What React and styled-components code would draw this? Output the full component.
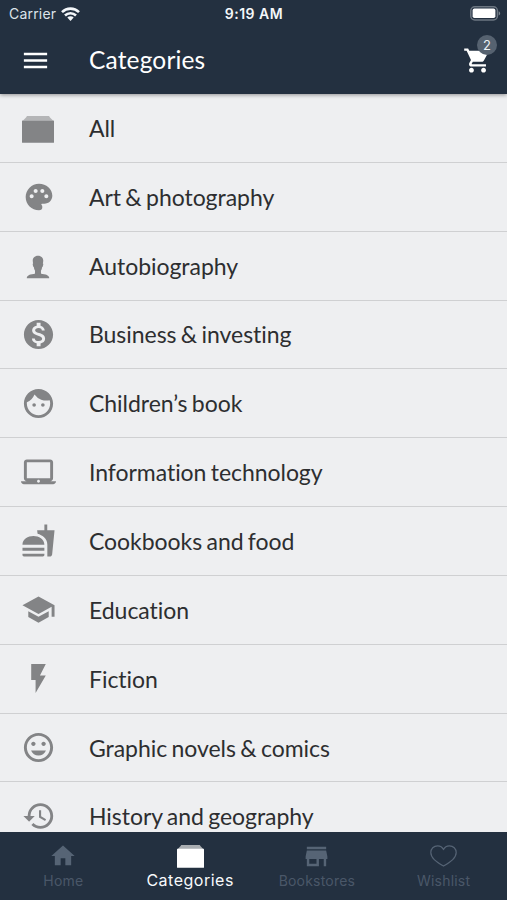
import React from "react";
import styled, { createGlobalStyle } from "styled-components";
import {
  MdMenu,
  MdShoppingCart,
  MdPalette,
  MdMonetizationOn,
  MdFace,
  MdLaptopMac,
  MdFastfood,
  MdSchool,
  MdFlashOn,
  MdInsertEmoticon,
  MdHistory,
  MdHome,
} from "react-icons/md";
import { IoIosPerson } from "react-icons/io";

const AlbumsIcon = ({ width, height, lid }) => (
  <svg width={width} height={height} viewBox="0 0 32 27" preserveAspectRatio="none">
    <path d="M5 0h22l1 1.6 3 3H1l3-3z" fill={lid} />
    <rect x="0" y="4.4" width="32" height="22.4" rx="0.6" fill="currentColor" />
  </svg>
);

const StoreIcon = () => (
  <svg width="29" height="29" viewBox="0 0 24 24">
    <path
      d="M20 4H4v2h16V4zm1 10v-2l-1-5H4l-1 5v2h1v6h10v-6h4v6h2v-6h1zm-9 4H6v-4h6v4z"
      fill="currentColor"
    />
  </svg>
);

const HeartIcon = () => (
  <svg width="27" height="22" viewBox="0 0 27 22">
    <path
      d="M13.5 4.6C12.3 2.1 10 .8 7.6.8 3.7.8.8 3.8.8 7.6c0 5.3 5 8.8 12.7 13.5C21.2 16.4 26.2 12.9 26.2 7.6c0-3.8-2.9-6.8-6.8-6.8-2.4 0-4.7 1.3-5.9 3.8z"
      fill="none"
      stroke="currentColor"
      strokeWidth="1.2"
      strokeLinejoin="round"
    />
  </svg>
);

const WifiIcon = () => (
  <svg width="19" height="14" viewBox="0 0 19 14">
    <g fill="none" stroke="#f4f7fa" strokeWidth="2.6">
      <path d="M1 5.1a12.2 12.2 0 0 1 17 0" />
      <path d="M4 8.5a7.9 7.9 0 0 1 11 0" />
    </g>
    <path d="M6.3 10.6a4.6 4.6 0 0 1 6.4 0L9.5 13.9z" fill="#f4f7fa" />
  </svg>
);

const BatteryIcon = () => (
  <svg width="31" height="15" viewBox="0 0 31 15">
    <rect x="0.8" y="0.8" width="26.6" height="13.2" rx="4" fill="none" stroke="#6c7681" strokeWidth="1.5" />
    <rect x="2.6" y="2.6" width="22.8" height="9.4" rx="1.8" fill="#fff" />
    <path d="M28.7 5.2a2.4 2.4 0 0 1 0 4.4z" fill="#7c8690" />
  </svg>
);

const categories = [
  { name: "All", icon: <AlbumsIcon width={32} height={27} lid="#b4b5b7" />, shift: -1, drop: 4 },
  { name: "Art & photography", icon: <MdPalette size={32} /> },
  { name: "Autobiography", icon: <IoIosPerson size={30} />, shift: -1, drop: 3 },
  { name: "Business & investing", icon: <MdMonetizationOn size={35} /> },
  { name: "Children’s book", icon: <MdFace size={35} /> },
  { name: "Information technology", icon: <MdLaptopMac size={35} /> },
  { name: "Cookbooks and food", icon: <MdFastfood size={35} /> },
  { name: "Education", icon: <MdSchool size={35} /> },
  { name: "Fiction", icon: <MdFlashOn size={35} /> },
  { name: "Graphic novels & comics", icon: <MdInsertEmoticon size={35} /> },
  { name: "History and geography", icon: <MdHistory size={34} /> },
];

const tabs = [
  { name: "Home", icon: <MdHome size={28} /> },
  { name: "Categories", icon: <AlbumsIcon width={27} height={23} lid="#a9adb1" />, active: true },
  { name: "Bookstores", icon: <StoreIcon /> },
  { name: "Wishlist", icon: <HeartIcon /> },
];

const App = () => {
  return (
    <Container>
      <GlobalStyle />
      <Header>
        <StatusBar>
          <Carrier>
            Carrier
            <WifiIcon />
          </Carrier>
          <Time>9:19 AM</Time>
          <Battery>
            <BatteryIcon />
          </Battery>
        </StatusBar>
        <Toolbar>
          <MenuButton aria-label="menu">
            <MdMenu size={31} />
          </MenuButton>
          <Title>Categories</Title>
          <CartButton aria-label="cart">
            <MdShoppingCart size={29} />
            <Badge>2</Badge>
          </CartButton>
        </Toolbar>
      </Header>

      <List>
        {categories.map((item) => (
          <Row key={item.name}>
            <RowIcon $shift={item.shift} $drop={item.drop}>
              {item.icon}
            </RowIcon>
            <RowText>{item.name}</RowText>
          </Row>
        ))}
      </List>

      <TabBar>
        {tabs.map((tab) => (
          <Tab key={tab.name} $active={tab.active}>
            <TabIcon>{tab.icon}</TabIcon>
            <TabText $active={tab.active}>{tab.name}</TabText>
          </Tab>
        ))}
      </TabBar>
    </Container>
  );
};

const GlobalStyle = createGlobalStyle`
  * {
    box-sizing: border-box;
  }
  body {
    margin: 0;
    background-color: #eeeff1;
  }
  svg {
    display: block;
    flex-shrink: 0;
  }
`;

const Container = styled.div`
  display: flex;
  flex-direction: column;
  width: 507px;
  height: 900px;
  overflow: hidden;
  background-color: #eeeff1;
  font-family: Lato, "Liberation Sans", sans-serif;
  font-variant-ligatures: none;
`;

const Header = styled.div`
  flex: none;
  height: 94px;
  background-color: #233040;
  box-shadow: 0 1px 4px rgba(0, 0, 0, 0.4);
  z-index: 1;
`;

const StatusBar = styled.div`
  display: grid;
  grid-template-columns: 1fr auto 1fr;
  align-items: center;
  height: 27px;
  padding: 0 6px 0 9px;
  font-family: Inter, "Liberation Sans", sans-serif;
  color: #f4f7fa;
`;

const Carrier = styled.div`
  display: flex;
  align-items: center;
  gap: 5px;
  font-size: 14px;
  letter-spacing: 0.2px;
  color: #dce3ea;
`;

const Time = styled.div`
  font-size: 14px;
  font-weight: 600;
  letter-spacing: 0.5px;
  padding-right: 2px;
`;

const Battery = styled.div`
  display: flex;
  justify-content: flex-end;
`;

const Toolbar = styled.div`
  display: flex;
  align-items: center;
  height: 66px;
  padding: 0 15px 0 20px;
  color: white;
`;

const MenuButton = styled.button`
  width: 69px;
  padding: 0;
  border: none;
  background: none;
  color: inherit;
  cursor: pointer;
`;

const Title = styled.div`
  flex: 1;
  font-size: 24.5px;
  line-height: 30px;
  letter-spacing: 0.15px;
`;

const CartButton = styled.button`
  position: relative;
  padding: 0;
  border: none;
  background: none;
  color: inherit;
  cursor: pointer;
`;

const Badge = styled.span`
  position: absolute;
  top: -11px;
  right: -5px;
  width: 20px;
  height: 20px;
  border-radius: 50%;
  background-color: #566270;
  color: #eef2f6;
  font-family: Inter, "Liberation Sans", sans-serif;
  font-size: 13px;
  line-height: 20px;
  text-align: center;
`;

const List = styled.div`
  flex: 1;
  min-height: 0;
  overflow: hidden;
`;

const Row = styled.div`
  display: flex;
  align-items: center;
  height: 68.85px;
  border-bottom: 1px solid #cfd0d2;
`;

const RowIcon = styled.div`
  display: flex;
  justify-content: center;
  width: 77.5px;
  margin-left: ${(props) => props.$shift || 0}px;
  margin-right: ${(props) => 11.5 - (props.$shift || 0)}px;
  padding-top: ${(props) => props.$drop || 0}px;
  color: #838486;
`;

const RowText = styled.div`
  font-size: 23px;
  line-height: 30px;
  letter-spacing: -0.04px;
  word-spacing: -1.5px;
  color: #2d2e30;
  white-space: nowrap;
`;

const TabBar = styled.div`
  display: flex;
  flex: none;
  height: 68.5px;
  background-color: #233040;
`;

const Tab = styled.div`
  display: flex;
  flex: 1;
  flex-direction: column;
  align-items: center;
  color: ${(props) => (props.$active ? "#ffffff" : "#566475")};
`;

const TabIcon = styled.div`
  display: flex;
  align-items: center;
  justify-content: center;
  height: 32px;
  margin-top: 8.5px;
`;

const TabText = styled.div`
  font-family: Inter, "Liberation Sans", sans-serif;
  font-size: ${(props) => (props.$active ? "16px" : "14px")};
  line-height: 17px;
  letter-spacing: ${(props) => (props.$active ? "0.5px" : "0.2px")};
  color: ${(props) => (props.$active ? "#f8fafc" : "#4a5768")};
`;

export default App;
